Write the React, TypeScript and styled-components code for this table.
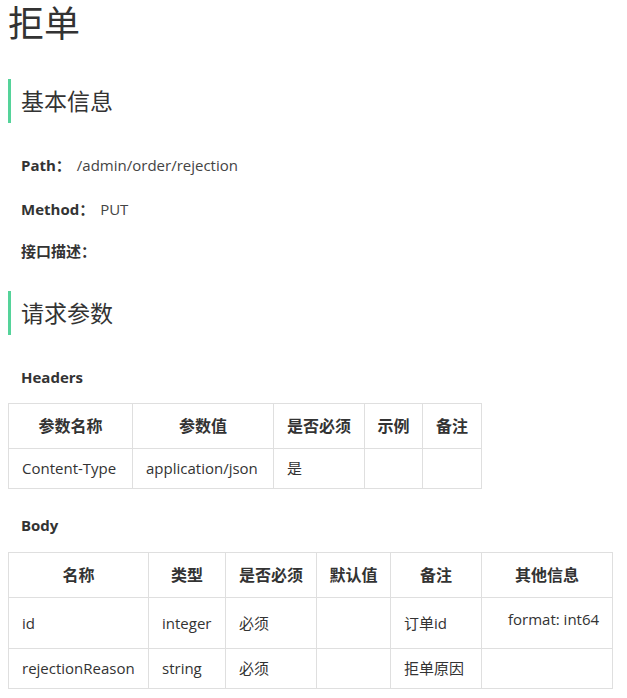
import styled, { createGlobalStyle } from "styled-components";

const GlobalStyle = createGlobalStyle`
	body {
		margin: 0;
		background: #fff;
		font-family: "Open Sans", "Noto Sans CJK SC", sans-serif;
		color: #333;
	}
`;

const Page = styled.div`
	padding: 4px 8px 0;
	width: 605px;
	font-size: 15px;
`;

const Title = styled.h1`
	margin: 0;
	font-size: 36px;
	font-weight: 400;
	line-height: 39px;
	color: #333;
`;

const Section = styled.h2<{ top: number }>`
	margin: ${(p) => p.top}px 0 0;
	border-left: 3px solid #55d39a;
	padding-left: 10px;
	font-size: 23px;
	font-weight: 400;
	line-height: 44px;
	color: #333;
`;

const Field = styled.div<{ top: number }>`
	margin-top: ${(p) => p.top}px;
	padding-left: 13px;
	line-height: 22px;
	color: #444;
`;

const Label = styled.b`
	font-weight: 700;
	color: #333;
	margin-right: 6px;
`;

const SubTitle = styled.h4<{ top: number }>`
	margin: ${(p) => p.top}px 0 0;
	padding-left: 13px;
	font-size: 15px;
	font-weight: 700;
	line-height: 22px;
	color: #333;
`;

const Table = styled.table<{ width: number; top: number }>`
	margin-top: ${(p) => p.top}px;
	width: ${(p) => p.width}px;
	table-layout: fixed;
	border-collapse: collapse;
	font-size: 15px;
`;

const Th = styled.th`
	border: 1px solid #dfdfdf;
	padding: 10px 4px;
	font-size: 16px;
	line-height: 24px;
	font-weight: 700;
	text-align: center;
	white-space: nowrap;
	color: #333;
`;

const Td = styled.td`
	border: 1px solid #dfdfdf;
	padding: 8px 13px;
	line-height: 23px;
	text-align: left;
	white-space: nowrap;
	color: #333;
`;

const Note = styled.div`
	margin: 3px 0 10px 13px;
	line-height: 21px;
`;

const headerCols = [124, 141, 91, 58, 59];
const bodyCols = [140, 77, 91, 74, 91, 131];

export default function App() {
	return (
		<Page>
			<GlobalStyle />
			<Title>拒单</Title>
			<Section top={36}>基本信息</Section>
			<Field top={31}>
				<Label>Path：</Label>/admin/order/rejection
			</Field>
			<Field top={22}>
				<Label>Method：</Label>PUT
			</Field>
			<Field top={20}>
				<Label>接口描述：</Label>
			</Field>
			<Section top={29}>请求参数</Section>
			<SubTitle top={31}>Headers</SubTitle>
			<Table width={474} top={15}>
				<colgroup>
					{headerCols.map((w, i) => (
						<col key={i} style={{ width: w }} />
					))}
				</colgroup>
				<thead>
					<tr>
						<Th>参数名称</Th>
						<Th>参数值</Th>
						<Th>是否必须</Th>
						<Th>示例</Th>
						<Th>备注</Th>
					</tr>
				</thead>
				<tbody>
					<tr>
						<Td>Content-Type</Td>
						<Td>application/json</Td>
						<Td>是</Td>
						<Td></Td>
						<Td></Td>
					</tr>
				</tbody>
			</Table>
			<SubTitle top={25}>Body</SubTitle>
			<Table width={605} top={16}>
				<colgroup>
					{bodyCols.map((w, i) => (
						<col key={i} style={{ width: w }} />
					))}
				</colgroup>
				<thead>
					<tr>
						<Th>名称</Th>
						<Th>类型</Th>
						<Th>是否必须</Th>
						<Th>默认值</Th>
						<Th>备注</Th>
						<Th>其他信息</Th>
					</tr>
				</thead>
				<tbody>
					<tr>
						<Td>id</Td>
						<Td>integer</Td>
						<Td>必须</Td>
						<Td></Td>
						<Td>订单id</Td>
						<Td>
							<Note>format: int64</Note>
						</Td>
					</tr>
					<tr>
						<Td>rejectionReason</Td>
						<Td>string</Td>
						<Td>必须</Td>
						<Td></Td>
						<Td>拒单原因</Td>
						<Td></Td>
					</tr>
				</tbody>
			</Table>
		</Page>
	);
}
